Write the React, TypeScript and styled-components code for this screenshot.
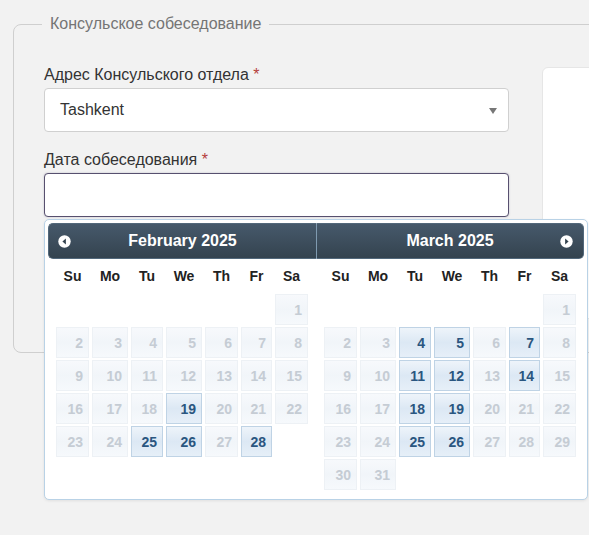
import styled, {createGlobalStyle} from "styled-components";

const GlobalStyle = createGlobalStyle`
  html, body {
    margin: 0;
    padding: 0;
    background: #f2f2f2;
    overflow: hidden;
  }
  body {
    font-family: "Liberation Sans", Arial, sans-serif;
  }
`;

const Page = styled.div`
  padding: 14px 0 0 13px;
  width: 760px;
  height: 535px;
  box-sizing: border-box;
`;

const Fieldset = styled.fieldset`
  margin: 0;
  border: 1px solid #cfcfcf;
  border-radius: 8px;
  padding: 31px 0 33px 30px;
  min-width: 0;
`;

const Legend = styled.legend`
  margin-left: -2px;
  padding: 0 8px;
  font-size: 16px;
  line-height: 20px;
  color: #757575;
`;

const Row = styled.div`
  display: flex;
  align-items: flex-start;
  gap: 33px;
`;

const FormCol = styled.div`
  width: 465px;
  display: flex;
  flex-direction: column;
`;

const Card = styled.div`
  flex: 1;
  margin-top: 2px;
  height: 250px;
  background: #fff;
  border: 1px solid #e6e6e6;
  border-radius: 6px;
`;

const Label = styled.label`
  display: block;
  font-size: 16px;
  line-height: 20px;
  color: #333;
  margin-bottom: 3px;
`;

const Required = styled.span`
  color: #b5403c;
`;

const Group = styled.div<{ $last?: boolean }>`
  margin-bottom: ${(p) => (p.$last ? "0" : "18px")};
`;

const Select = styled.div`
  position: relative;
  height: 44px;
  box-sizing: border-box;
  border: 1px solid #d0d0d0;
  border-radius: 4px;
  background: #fff;
  display: flex;
  align-items: center;
  padding-left: 15px;
  font-size: 16px;
  color: #333;
`;

const Caret = styled.span`
  position: absolute;
  right: 11px;
  top: 19px;
  width: 0;
  height: 0;
  border-left: 4px solid transparent;
  border-right: 4px solid transparent;
  border-top: 6px solid #777;
`;

const DateField = styled.div`
  position: relative;
`;

const Input = styled.input`
  display: block;
  width: 100%;
  height: 44px;
  box-sizing: border-box;
  border: 1px solid #57506f;
  border-radius: 4px;
  background: #fff;
  outline: none;
  box-shadow: 0 0 2px rgba(87, 80, 111, 0.35);
`;

const Picker = styled.div`
  position: absolute;
  left: 0;
  top: calc(100% + 2px);
  width: 544px;
  height: 281px;
  box-sizing: border-box;
  padding: 3px;
  background: #fff;
  border: 1px solid #b9d2e6;
  border-radius: 5px;
  box-shadow: 0 1px 3px rgba(0, 0, 0, 0.08);
  display: flex;
  font-family: "Liberation Sans", Arial, sans-serif;
`;

const Month = styled.div`
  width: 50%;
`;

const Header = styled.div<{ $side: "left" | "right" }>`
  position: relative;
  height: 36px;
  box-sizing: border-box;
  background: linear-gradient(#46596b, #34434f);
  border: 1px solid #52687b;
  border-radius: ${(p) => (p.$side === "left" ? "5px 0 0 5px" : "0 5px 5px 0")};
  ${(p) => (p.$side === "right" ? "border-left: 1px solid #7f9ab0;" : "border-right: none;")}
  display: flex;
  align-items: center;
  justify-content: center;
  color: #fff;
  font-weight: bold;
  font-size: 16px;
`;

const Nav = styled.span<{ $side: "left" | "right" }>`
  position: absolute;
  top: 11px;
  ${(p) => (p.$side === "left" ? "left: 9px;" : "right: 10px;")}
  width: 13px;
  height: 13px;
  display: flex;
`;

const Table = styled.div`
  margin: 0 8px;
`;

const Grid = styled.div`
  display: grid;
  grid-template-columns: 33px 36px 32px 36px 33px 31px 33px;
  column-gap: 3px;
  row-gap: 2px;
`;

const DayNames = styled(Grid)`
  margin: 0 0 2px;
  height: 33px;
  align-items: center;
`;

const DayName = styled.span`
  text-align: center;
  font-weight: bold;
  font-size: 14px;
  color: #222;
`;

const Cell = styled.span<{ $on?: boolean }>`
  height: 31px;
  box-sizing: border-box;
  display: flex;
  align-items: center;
  justify-content: flex-end;
  padding-right: 5px;
  font-weight: bold;
  font-size: 14px;
  border: 1px solid ${(p) => (p.$on ? "#bfd3e5" : "#edf1f5")};
  background: ${(p) =>
    p.$on
      ? "linear-gradient(#eef4fa, #dce8f4 50%, #e6eff8)"
      : "linear-gradient(#f7f9fc, #f1f5f9 50%, #f6f9fc)"};
  color: ${(p) => (p.$on ? "#2a5680" : "#c5ccd4")};
`;

const Empty = styled.span`
  height: 31px;
`;

function NavIcon({dir}: { dir: "left" | "right" }) {
  return (
    <svg width="13" height="13" viewBox="0 0 13 13">
      <circle cx="6.5" cy="6.5" r="6.2" fill="#fff" />
      {dir === "left" ? (
        <path d="M7.9 3.6 L4.4 6.5 L7.9 9.4 Z" fill="#34434f" />
      ) : (
        <path d="M5.1 3.6 L8.6 6.5 L5.1 9.4 Z" fill="#34434f" />
      )}
    </svg>
  );
}

const dayNames = ["Su", "Mo", "Tu", "We", "Th", "Fr", "Sa"];

const months = [
  {title: "February 2025", offset: 6, days: 28, on: [19, 25, 26, 28]},
  {title: "March 2025", offset: 6, days: 31, on: [4, 5, 7, 11, 12, 14, 18, 19, 25, 26]},
];

function App() {
  return (
    <Page>
      <GlobalStyle />
      <Fieldset>
        <Legend>Консульское собеседование</Legend>
        <Row>
          <FormCol>
            <Group>
              <Label>
                Адрес Консульского отдела <Required>*</Required>
              </Label>
              <Select>
                Tashkent
                <Caret />
              </Select>
            </Group>
            <Group $last>
              <Label>
                Дата собеседования <Required>*</Required>
              </Label>
              <DateField>
                <Input />
                <Picker>
                  {months.map((m, i) => (
                    <Month key={m.title}>
                      <Header $side={i === 0 ? "left" : "right"}>
                        {i === 0 && (
                          <Nav $side="left">
                            <NavIcon dir="left" />
                          </Nav>
                        )}
                        {m.title}
                        {i === 1 && (
                          <Nav $side="right">
                            <NavIcon dir="right" />
                          </Nav>
                        )}
                      </Header>
                      <Table>
                        <DayNames>
                          {dayNames.map((d) => (
                            <DayName key={d}>{d}</DayName>
                          ))}
                        </DayNames>
                        <Grid>
                          {Array.from({length: m.offset}).map((_, k) => (
                            <Empty key={"e" + k} />
                          ))}
                          {Array.from({length: m.days}).map((_, k) => (
                            <Cell key={k} $on={m.on.includes(k + 1)}>
                              {k + 1}
                            </Cell>
                          ))}
                        </Grid>
                      </Table>
                    </Month>
                  ))}
                </Picker>
              </DateField>
            </Group>
          </FormCol>
          <Card />
        </Row>
      </Fieldset>
    </Page>
  );
}

export default App;
